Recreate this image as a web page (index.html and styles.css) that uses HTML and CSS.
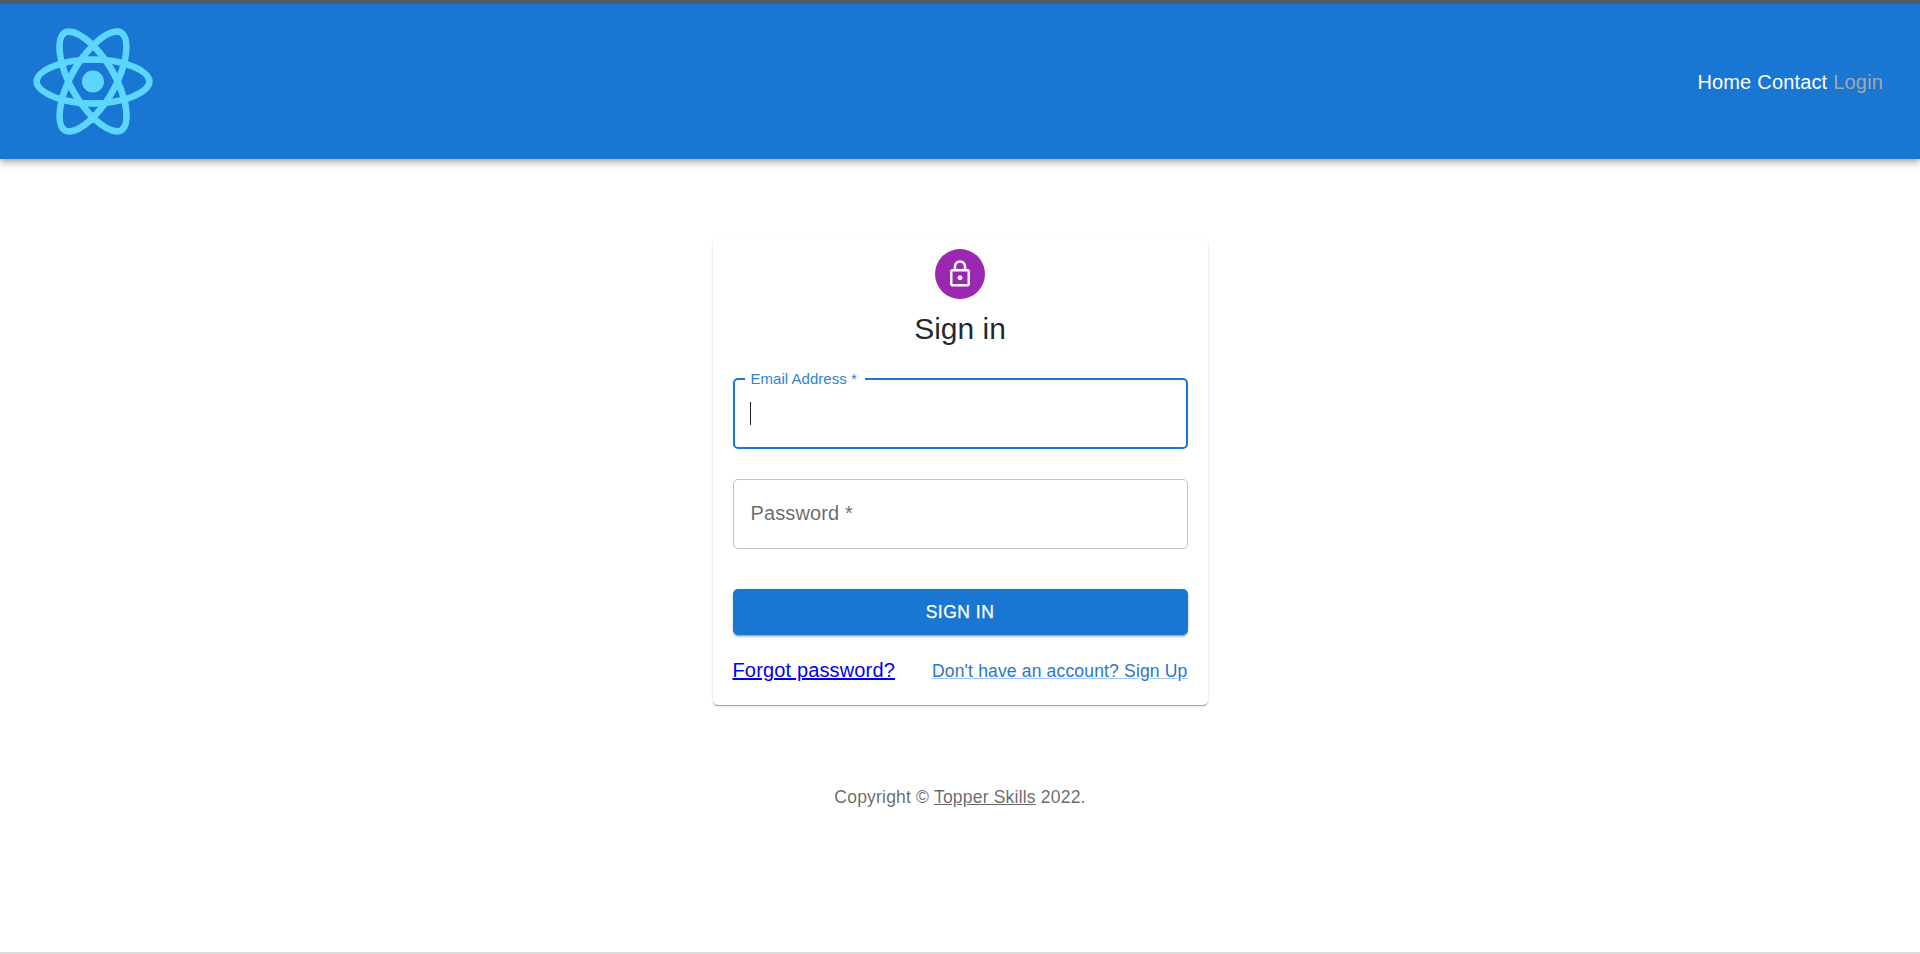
FILE: index.html
```html
<!DOCTYPE html>
<html lang="en">
<head>
    <meta charset="UTF-8">
    <title>Sign in</title>
    <link rel="stylesheet" href="styles.css">
</head>
<body>
    <div class="page">
        <header class="topbar">
            <svg class="logo" viewBox="172 75 498 443" aria-label="React logo">
                <g fill="#5cd6fd">
                    <path class="logo-rings" d="M666.3 296.5c0-32.5-40.7-63.3-103.1-82.4 14.4-63.6 8-114.2-20.2-130.4-6.5-3.8-14.1-5.6-22.4-5.6v22.3c4.6 0 8.3.9 11.4 2.6 13.6 7.8 19.5 37.5 14.9 75.7-1.1 9.4-2.9 19.3-5.1 29.4-19.6-4.8-41-8.5-63.5-10.9-13.5-18.5-27.5-35.3-41.6-50 32.6-30.3 63.2-46.9 84-46.9V78c-27.5 0-63.5 19.6-99.9 53.6-36.4-33.8-72.4-53.2-99.9-53.2v22.3c20.7 0 51.4 16.5 84 46.6-14 14.7-28 31.4-41.3 49.9-22.6 2.4-44 6.1-63.6 11-2.3-10-4-19.7-5.2-29-4.7-38.2 1.1-67.9 14.6-75.8 3-1.8 6.9-2.6 11.5-2.6V78.5c-8.4 0-16 1.8-22.6 5.6-28.1 16.2-34.4 66.7-19.9 130.1-62.2 19.2-102.7 49.9-102.7 82.3 0 32.5 40.7 63.3 103.1 82.4-14.4 63.6-8 114.2 20.2 130.4 6.5 3.8 14.1 5.6 22.5 5.6 27.5 0 63.5-19.6 99.9-53.6 36.4 33.8 72.4 53.2 99.9 53.2 8.4 0 16-1.8 22.6-5.6 28.1-16.2 34.4-66.7 19.9-130.1 62-19.1 102.5-49.9 102.5-82.3zm-130.2-66.7c-3.7 12.9-8.3 26.2-13.5 39.5-4.1-8-8.4-16-13.1-24-4.6-8-9.5-15.8-14.4-23.4 14.2 2.1 27.9 4.7 41 7.9zm-45.8 106.5c-7.8 13.5-15.8 26.3-24.1 38.2-14.9 1.3-30 2-45.2 2-15.1 0-30.2-.7-45-1.9-8.3-11.9-16.4-24.6-24.2-38-7.6-13.1-14.5-26.4-20.8-39.8 6.2-13.4 13.2-26.8 20.7-39.9 7.8-13.5 15.8-26.3 24.1-38.2 14.9-1.3 30-2 45.2-2 15.1 0 30.2.7 45 1.9 8.3 11.9 16.4 24.6 24.2 38 7.6 13.1 14.5 26.4 20.8 39.8-6.3 13.4-13.2 26.8-20.7 39.9zm32.3-13c5.4 13.4 10 26.8 13.8 39.8-13.1 3.2-26.9 5.9-41.2 8 4.9-7.7 9.8-15.6 14.4-23.7 4.6-8 8.9-16.1 13-24.1zM421.2 430c-9.3-9.6-18.6-20.3-27.8-32 9 .4 18.2.7 27.5.7 9.4 0 18.7-.2 27.8-.7-9 11.7-18.3 22.4-27.5 32zm-74.4-58.9c-14.2-2.1-27.9-4.7-41-7.9 3.7-12.9 8.3-26.2 13.5-39.5 4.1 8 8.4 16 13.1 24 4.7 8 9.5 15.8 14.4 23.4zM420.7 163c9.3 9.6 18.6 20.3 27.8 32-9-.4-18.2-.7-27.5-.7-9.4 0-18.7.2-27.8.7 9-11.7 18.3-22.4 27.5-32zm-74 58.9c-4.9 7.7-9.8 15.6-14.4 23.7-4.6 8-8.9 16-13 24-5.4-13.4-10-26.8-13.8-39.8 13.1-3.1 26.9-5.8 41.2-7.9zm-90.5 125.2c-35.4-15.1-58.3-34.9-58.3-50.6 0-15.7 22.9-35.6 58.3-50.6 8.6-3.7 18-7 27.7-10.1 5.7 19.6 13.2 40 22.5 60.9-9.2 20.8-16.6 41.1-22.2 60.6-9.9-3.1-19.3-6.5-28-10.2zM310 490c-13.6-7.8-19.5-37.5-14.9-75.7 1.1-9.4 2.9-19.3 5.1-29.4 19.6 4.8 41 8.5 63.5 10.9 13.5 18.5 27.5 35.3 41.6 50-32.6 30.3-63.2 46.9-84 46.9-4.5-.1-8.3-1-11.3-2.7zm237.2-76.2c4.7 38.2-1.1 67.9-14.6 75.8-3 1.8-6.9 2.6-11.5 2.6-20.7 0-51.4-16.5-84-46.6 14-14.7 28-31.4 41.3-49.9 22.6-2.4 44-6.1 63.6-11 2.3 10.1 4.1 19.8 5.2 29.1zm38.5-66.7c-8.6 3.7-18 7-27.7 10.1-5.7-19.6-13.2-40-22.5-60.9 9.2-20.8 16.6-41.1 22.2-60.6 9.9 3.1 19.3 6.5 28.1 10.2 35.4 15.1 58.3 34.9 58.3 50.6-.1 15.7-23 35.6-58.4 50.6z"/>
                    <circle cx="420.9" cy="296.5" r="45.7"/>
                </g>
            </svg>
            <nav class="nav">
                <a href="#">Home</a>
                <a href="#">Contact</a>
                <a href="#" class="nav-active">Login</a>
            </nav>
        </header>

        <main class="content">
            <div class="card">
                <div class="avatar">
                    <svg class="lock-icon" viewBox="0 0 24 24">
                        <path d="M18 8h-1V6c0-2.76-2.24-5-5-5S7 3.24 7 6v2H6c-1.1 0-2 .9-2 2v10c0 1.1.9 2 2 2h12c1.1 0 2-.9 2-2V10c0-1.1-.9-2-2-2zM9 6c0-1.66 1.34-3 3-3s3 1.34 3 3v2H9V6zm9 14H6V10h12v10zm-6-3c1.1 0 2-.9 2-2s-.9-2-2-2-2 .9-2 2 .9 2 2 2z"/>
                    </svg>
                </div>
                <h1 class="card-title">Sign in</h1>

                <form class="form">
                    <div class="field field-focused">
                        <label class="field-label">Email Address *</label>
                        <input type="text" class="field-input">
                        <span class="caret"></span>
                    </div>
                    <div class="field">
                        <input type="password" class="field-input" placeholder="Password *">
                    </div>
                    <button type="button" class="submit-btn">Sign In</button>
                    <div class="links">
                        <a href="#" class="forgot-link">Forgot password?</a>
                        <a href="#" class="signup-link">Don't have an account? Sign Up</a>
                    </div>
                </form>
            </div>

            <p class="copyright">Copyright © <a href="#">Topper Skills</a> 2022.</p>
        </main>
    </div>
</body>
</html>
```

FILE: styles.css
```css
* {
    box-sizing: border-box;
}
body {
    margin: 0;
    font-family: "Liberation Sans", Arial, sans-serif;
    background-color: #fff;
    color: rgba(0, 0, 0, 0.87);
}
.page {
    height: 954px;
    overflow: hidden;
    display: flex;
    flex-direction: column;
    border-top: 4px solid #4b5c6b;
    border-bottom: 2px solid #dcdcdc;
}
.topbar {
    flex: none;
    height: 155px;
    padding: 0 37px 0 33px;
    display: flex;
    align-items: center;
    justify-content: space-between;
    background-color: #1976d2;
    box-shadow: 0 2px 5px -1px rgba(0, 0, 0, 0.2), 0 5px 6px 0 rgba(0, 0, 0, 0.14), 0 1px 12px 0 rgba(0, 0, 0, 0.12);
}
.logo {
    width: 120px;
    height: 107px;
}
.logo-rings {
    stroke: #5cd6fd;
    stroke-width: 5;
}
.nav {
    display: flex;
    gap: 6px;
    padding-top: 2px;
    font-size: 20px;
    letter-spacing: 0.15px;
}
.nav a {
    color: #fff;
    text-decoration: none;
}
.nav .nav-active {
    color: #a3a8ad;
}
.content {
    flex: 1;
    padding-top: 80px;
}
.card {
    width: 495px;
    margin: 0 auto;
    padding: 10px 20px 20px;
    display: flex;
    flex-direction: column;
    align-items: center;
    background-color: #fff;
    border-radius: 5px;
    box-shadow: 0 2px 1px -1px rgba(0, 0, 0, 0.2), 0 1px 1px 0 rgba(0, 0, 0, 0.14), 0 1px 3px 0 rgba(0, 0, 0, 0.12);
}
.avatar {
    width: 50px;
    height: 50px;
    margin-bottom: 10px;
    display: flex;
    align-items: center;
    justify-content: center;
    border-radius: 50%;
    background-color: #9c27b0;
}
.lock-icon {
    width: 30px;
    height: 30px;
    fill: #fff;
}
.card-title {
    margin: 0;
    font-size: 30px;
    font-weight: 400;
    line-height: 40px;
}
.form {
    width: 100%;
    margin-top: 10px;
    display: flex;
    flex-direction: column;
}
.field {
    position: relative;
    height: 70px;
    margin: 20px 0 10px;
    border: 1px solid #c4c4c4;
    border-radius: 5px;
}
.field-focused {
    height: 71px;
    margin-top: 19px;
    border: 2px solid #1976d2;
}
.field-label {
    position: absolute;
    top: -9px;
    left: 10px;
    padding: 0 8px 0 6px;
    font-size: 15px;
    line-height: 16px;
    letter-spacing: 0.03px;
    color: #2f83d8;
    background-color: #fff;
}
.field-input {
    width: 100%;
    height: 100%;
    padding: 0 17px 2px;
    border: none;
    outline: none;
    background: none;
    font-family: inherit;
    font-size: 20px;
    letter-spacing: 0.12px;
}
.field-input::placeholder {
    color: rgba(0, 0, 0, 0.6);
    opacity: 1;
}
.caret {
    position: absolute;
    top: 22px;
    left: 15px;
    width: 1px;
    height: 23px;
    background-color: #222;
}
.submit-btn {
    display: block;
    width: 100%;
    height: 46px;
    margin: 30px 0 0;
    border: none;
    border-radius: 5px;
    background-color: #1976d2;
    color: #fff;
    font-family: inherit;
    font-size: 17.5px;
    font-weight: 500;
    letter-spacing: 0.5px;
    -webkit-text-stroke: 0.25px #fff;
    text-transform: uppercase;
    box-shadow: 0 3px 1px -2px rgba(0, 0, 0, 0.2), 0 2px 2px 0 rgba(0, 0, 0, 0.14), 0 1px 5px 0 rgba(0, 0, 0, 0.12);
}
.links {
    display: flex;
    justify-content: space-between;
    align-items: baseline;
    padding: 24px 0 3px;
}
.forgot-link {
    font-size: 20px;
    letter-spacing: 0.15px;
    color: #00e;
}
.signup-link {
    font-size: 17.5px;
    letter-spacing: 0.17px;
    color: #2a74d0;
    text-decoration-color: rgba(25, 118, 210, 0.4);
}
.copyright {
    margin: 80px 0 0;
    text-align: center;
    font-size: 17.5px;
    line-height: 25px;
    letter-spacing: 0.2px;
    color: rgba(0, 0, 0, 0.6);
}
.copyright a {
    color: inherit;
}
```
